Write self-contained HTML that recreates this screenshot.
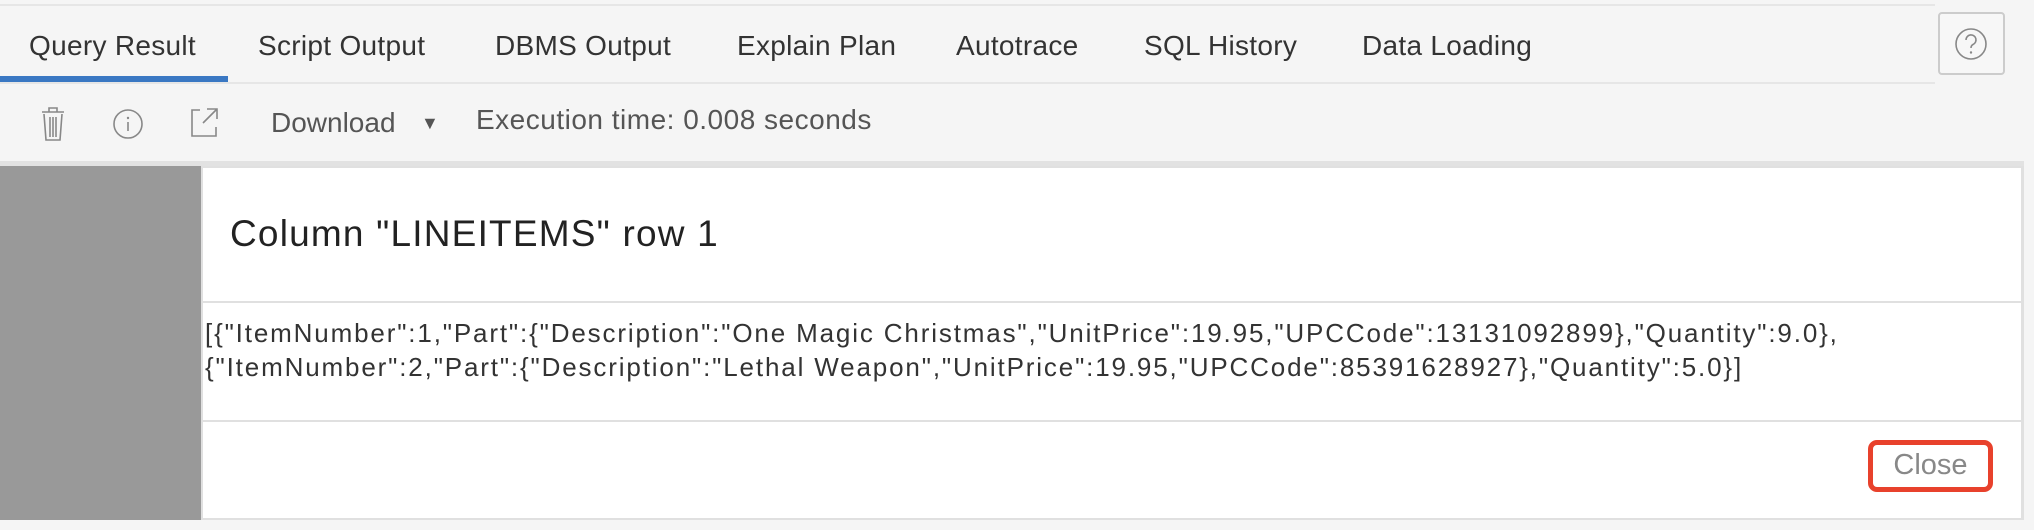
<!DOCTYPE html>
<html><head><meta charset="utf-8"><style>
*{margin:0;padding:0;box-sizing:border-box}
body{width:2034px;height:530px;background:#f5f5f5;font-family:"Liberation Sans",sans-serif;position:relative;overflow:hidden}
.a{position:absolute}
.tab{position:absolute;top:30px;font-size:28px;letter-spacing:0.3px;color:#333;white-space:nowrap}
.tb{position:absolute;top:106px;font-size:28px;color:#555;white-space:nowrap}
</style></head><body>
<div class="a" style="left:0;top:4px;width:1935px;height:2px;background:#e6e6e6"></div>
<div class="a" style="left:0;top:82px;width:1935px;height:2px;background:#e6e6e6"></div>
<div class="tab" style="left:29px">Query Result</div>
<div class="tab" style="left:258px">Script Output</div>
<div class="tab" style="left:495px">DBMS Output</div>
<div class="tab" style="left:737px">Explain Plan</div>
<div class="tab" style="left:956px">Autotrace</div>
<div class="tab" style="left:1144px">SQL History</div>
<div class="tab" style="left:1362px">Data Loading</div>
<div class="a" style="left:0;top:76px;width:228px;height:6px;background:#3a78c3"></div>
<div class="a" style="left:1938px;top:12px;width:67px;height:63px;border:2px solid #ccc;border-radius:4px;background:#f7f7f7"></div>
<svg class="a" style="left:1951px;top:26px" width="40" height="36" viewBox="0 0 40 36"><circle cx="20" cy="18" r="15" fill="none" stroke="#888" stroke-width="1.6"/><path d="M15 14a5 5 0 1 1 7 4.5c-1.5.8-2 1.6-2 3.5" fill="none" stroke="#888" stroke-width="1.6"/><circle cx="20" cy="26.5" r="1.2" fill="#888"/></svg>
<svg class="a" style="left:38px;top:106px" width="30" height="36" viewBox="0 0 30 36"><path d="M4 6h22M11 6V2h8v4M6 8l2 26h14l2-26M12 11v20M15 11v20M18 11v20" fill="none" stroke="#888" stroke-width="1.6"/></svg>
<svg class="a" style="left:112px;top:108px" width="32" height="32" viewBox="0 0 32 32"><circle cx="16" cy="16" r="14" fill="none" stroke="#888" stroke-width="1.6"/><path d="M16 14v9" stroke="#888" stroke-width="1.6"/><circle cx="16" cy="10" r="1.2" fill="#888"/></svg>
<svg class="a" style="left:190px;top:106px" width="30" height="32" viewBox="0 0 30 32"><path d="M10 4H2v26h24v-9M17 3h10v10M27 3L13 17" fill="none" stroke="#888" stroke-width="1.6"/></svg>
<div class="tb" style="left:271px;top:107px">Download</div>
<div class="tb" style="left:421px;top:113px;font-size:18px">▼</div>
<div class="tb" style="left:476px;top:104px;letter-spacing:0.5px">Execution time: 0.008 seconds</div>
<div class="a" style="left:0;top:161px;width:2024px;height:5px;background:#e2e2e2"></div>
<div class="a" style="left:0;top:166px;width:201px;height:354px;background:#999"></div>
<div class="a" style="left:201px;top:166px;width:1823px;height:354px;background:#e0e0e0"></div>
<div class="a" style="left:203px;top:168px;width:1818px;height:133px;background:#fff"></div>
<div class="a" style="left:230px;top:213px;font-size:37px;letter-spacing:1.2px;color:#222">Column "LINEITEMS" row 1</div>
<div class="a" style="left:203px;top:303px;width:1818px;height:117px;background:#fff"></div>
<div class="a" style="left:205px;top:316px;font-size:26px;letter-spacing:1.85px;color:#333;line-height:34px;white-space:nowrap">[{"ItemNumber":1,"Part":{"Description":"One Magic Christmas","UnitPrice":19.95,"UPCCode":13131092899},"Quantity":9.0},<br>{"ItemNumber":2,"Part":{"Description":"Lethal Weapon","UnitPrice":19.95,"UPCCode":85391628927},"Quantity":5.0}]</div>
<div class="a" style="left:203px;top:422px;width:1818px;height:96px;background:#fff"></div>
<div class="a" style="left:1868px;top:440px;width:125px;height:52px;border:5px solid #e8412c;border-radius:9px;text-align:center;line-height:41px;font-size:29px;color:#888">Close</div>
</body></html>
